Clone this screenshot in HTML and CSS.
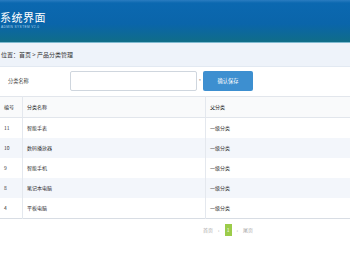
FILE: index.html
```html
<!DOCTYPE html>
<html lang="zh">
  <head>
    <meta charset="UTF-8" />
    <meta name="viewport" content="width=device-width, initial-scale=1.0" />
    <title>产品分类管理</title>
    <link rel="stylesheet" href="styles.css">
  </head>
  <body>
    <div class="top">
      <div class="logo">
        <div class="logo-title">系统界面</div>
        <div class="logo-sub">ADMIN SYSTEM V2.0</div>
      </div>
    </div>
    <div class="crumb">
      <span class="crumb-text">位置：首页 &gt; 产品分类管理</span>
    </div>

    <form class="edit">
      <label class="edit-label">分类名称</label>
      <input class="edit-input" type="text" />
      <span class="star">*</span>
      <button class="btn" type="button">确认保存</button>
    </form>

    <table class="list">
      <thead>
        <tr>
          <th class="col-id">编号</th>
          <th class="col-name">分类名称</th>
          <th>父分类</th>
        </tr>
      </thead>
      <tbody>
        <tr><td>11</td><td>智能手表</td><td>一级分类</td></tr>
        <tr class="odd"><td>10</td><td>数码播放器</td><td>一级分类</td></tr>
        <tr><td>9</td><td>智能手机</td><td>一级分类</td></tr>
        <tr class="odd"><td>8</td><td>笔记本电脑</td><td>一级分类</td></tr>
        <tr><td>4</td><td>平板电脑</td><td>一级分类</td></tr>
      </tbody>
    </table>

    <div class="pager">
      <span class="pg">首页</span>
      <span class="pg">‹</span>
      <span class="pg current">1</span>
      <span class="pg">›</span>
      <span class="pg">尾页</span>
    </div>
  </body>
</html>
```

FILE: styles.css
```css
body {
  margin: 0;
  font-family: "Noto Sans CJK SC", "Noto Sans", sans-serif;
  font-size: 5px;
  color: #333;
  background: #fff;
  overflow: hidden;
}

.top {
  height: 43px;
  background: linear-gradient(to bottom, #2a7cc0 0, #0b68b0 3px, #0a65aa 24px, #0f6c8c 40px, #127086 43px);
  border-bottom: 1px solid #7fbad0;
  box-sizing: border-box;
}

.logo {
  padding-top: 10px;
  color: #fff;
}

.logo-title {
  font-size: 11px;
  line-height: 15px;
  letter-spacing: 0.5px;
}

.logo-sub {
  font-family: "Liberation Sans", sans-serif;
  font-size: 3.2px;
  line-height: 5px;
  color: #a9d2ee;
  margin-left: 1px;
  letter-spacing: 0.4px;
}

.crumb {
  height: 23px;
  line-height: 24px;
  background: #eef3fa;
  border-bottom: 1px solid #e2e9f2;
  overflow: hidden;
}

.crumb-text {
  display: inline-block;
  padding-left: 1px;
  font-size: 6px;
  color: #333;
}

.edit {
  display: flex;
  align-items: center;
  margin: 3px 0 0;
  height: 21px;
}

.edit-label {
  width: 62px;
  padding-left: 8px;
  color: #444;
  font-size: 5.2px;
}

.edit-input {
  width: 127px;
  height: 20px;
  box-sizing: border-box;
  margin: 0;
  border: 1px solid #cfd6de;
  border-radius: 2px;
  background: #fff;
}

.star {
  width: 6px;
  text-align: center;
  color: #888;
}

.btn {
  width: 50px;
  height: 20px;
  margin: 0;
  padding: 0;
  border: none;
  border-radius: 2px;
  background: #3d8fd0;
  color: #fff;
  font-family: inherit;
  font-size: 5.2px;
}

.list {
  width: 100%;
  margin-top: 5px;
  border-collapse: collapse;
  border-top: 1px solid #e2e6ec;
  border-bottom: 1px solid #d8dde4;
}

.list th,
.list td {
  height: 20px;
  padding: 0 0 0 4px;
  text-align: left;
  font-weight: normal;
  line-height: 20px;
}

.list th {
  color: #222;
  background: #f9fafb;
  border-bottom: 1px solid #e2e6ec;
}

.list th + th,
.list td + td {
  border-left: 1px solid #e4e8ee;
}

.col-id {
  width: 18px;
}

.col-name {
  width: 178px;
}

.list tr.odd td {
  background: #f3f6fb;
}

.pager {
  display: flex;
  align-items: center;
  gap: 5px;
  margin: 5px 0 0 203px;
  color: #aaa;
}

.pg {
  line-height: 10px;
}

.current {
  width: 7px;
  height: 12px;
  line-height: 12px;
  text-align: center;
  background: #9ccc4a;
  color: #fff;
}
```
